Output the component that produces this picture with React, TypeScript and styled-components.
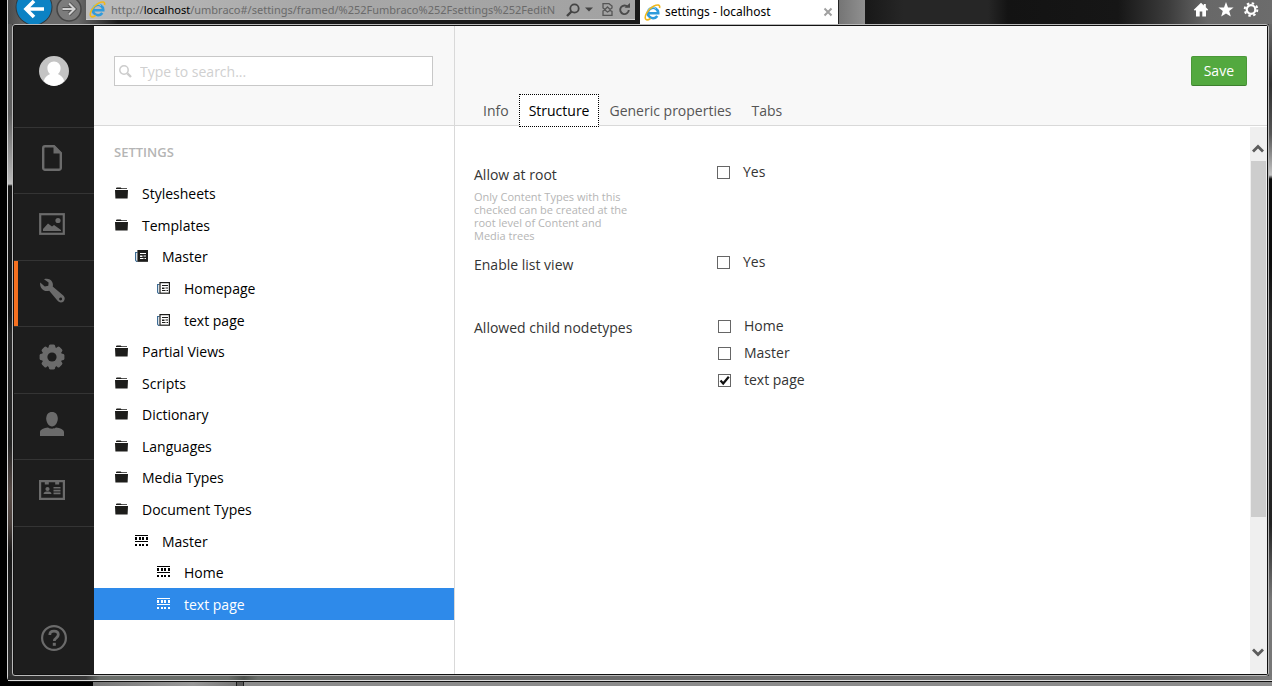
import React from 'react';
import styled, { createGlobalStyle } from 'styled-components';

const Global = createGlobalStyle`
  *, *::before, *::after { box-sizing: border-box; }
  html, body { margin: 0; padding: 0; background: #000; }
  body { font-family: "Open Sans", "Noto Sans", sans-serif; font-size: 14px; line-height: 20px; color: #343434; }
  button, input { font: inherit; color: inherit; margin: 0; padding: 0; }
  button { border: 0; background: none; cursor: pointer; }
  ul { list-style: none; margin: 0; padding: 0; }
  a { text-decoration: none; color: inherit; }
  svg { display: block; }
`;

/* ---------- window frame ---------- */

const Desktop = styled.div`
  min-height: 100vh;
  display: grid;
  grid-template-columns: 7px minmax(0, 1fr);
  grid-template-rows: minmax(0, 1fr) 4px;
  background: #000;
`;

const WindowFrame = styled.div`
  grid-column: 2;
  display: flex;
  flex-direction: column;
  border-left: 1px solid #d4d4d4;
  border-bottom: 1px solid #111;
  border-bottom-left-radius: 5px;
  background: #3c3c3c;
`;

const FrameBody = styled.div`
  flex: 1;
  display: grid;
  grid-template-columns: 4px minmax(0, 1fr) 3px;
`;

const LeftEdge = styled.div`
  background: linear-gradient(180deg, #5a5a5a 0, #606060 90px, #b4b4b4 155px, #c0c0c0 160px, #161616 162px, #161616 290px, #2b2b2b 310px, #242424 420px, #5a4d48 470px, #4a403c 500px, #161616 530px, #333 100%);
`;

const RightEdge = styled.div`
  background: linear-gradient(180deg, #666 0, #2f2f2f 60px, #555 110px, #c4c4c4 151px, #0c0c0c 155px, #0c0c0c 240px, #2c2c2c 300px, #222 500px, #777 575px, #777 100%);
`;

const BottomEdge = styled.div`
  height: 5px;
  border-bottom: 1px solid #dcdcdc;
  background: linear-gradient(90deg, #2c2c2c 0, #383838 78px, #6a6e6a 92px, #6a6e6a 220px, #4c504c 236px, #6a6e6a 250px, #666 400px, #707070 900px, #606060 1160px, #7a7a7a 100%);
`;

const Content = styled.div`
  display: flex;
  border: 1px solid #b9b9b9;
  border-radius: 3px;
  background: #111;
  padding: 1px;
`;

const App = styled.div`
  flex: 1;
  min-width: 0;
  display: flex;
  background: #fff;
`;

const BehindWindow = styled.div`
  grid-column: 2;
  display: flex;
  padding-left: 86px;
`;

const BehindLeft = styled.div`
  width: 143px;
  background: linear-gradient(90deg, #777, #999 100px, #777);
`;

const BehindDivider = styled.div`
  width: 8px;
  border: solid #1c1c1c;
  border-width: 0 1px;
  background: #5a5a5a;
`;

const BehindRight = styled.div`
  flex: 1;
  background: #8c8c8c;
`;

/* ---------- browser bar ---------- */

const BrowserBar = styled.header`
  height: 24px;
  display: flex;
  align-items: flex-start;
  overflow: hidden;
  font-family: "Noto Sans", "Open Sans", sans-serif;
  font-size: 12px;
  line-height: 18px;
  background: linear-gradient(90deg, #4c4c4c 0, #6a6a6a 20px, #6a6a6a 70px, #191919 110px, #191919 860px, #262626 895px, #262626 980px, #131313 1000px, #161616 1110px, #3c3c3c 1160px, #686868 1200px, #6c6c6c 100%);
`;

const HistoryButtons = styled.div`
  width: 78px;
  flex: none;
`;

const AddressBar = styled.form`
  width: 549px;
  height: 20px;
  flex: 0 1 auto;
  display: flex;
  align-items: center;
  gap: 5px;
  padding: 0 4px 0 3px;
  border-bottom: 1px solid #d0d0d0;
  background: linear-gradient(90deg, #bcbcbc 0, #a8a8a8 40%, #a2a2a2 100%);
`;

const Url = styled.div`
  flex: 1;
  min-width: 0;
  overflow: hidden;
  white-space: nowrap;
  font-size: 11px;
  color: #6a6a6a;
  b { font-weight: 400; color: #000; }
`;

const BarButton = styled.button`
  flex: none;
`;

const BrowserTab = styled.div`
  width: 199px;
  height: 24px;
  flex: none;
  display: flex;
  align-items: center;
  gap: 4px;
  margin-left: 5px;
  padding: 0 5px 0 4px;
  border-right: 1px solid #222;
  background: #fff;
  color: #000;
  span { flex: 1; }
`;

const NewTab = styled.button`
  width: 26px;
  height: 24px;
  flex: none;
  background: linear-gradient(90deg, #757575, #909090);
`;

const BrowserTools = styled.div`
  margin-left: auto;
  display: flex;
  gap: 9px;
  padding: 2px 13px 0 0;
`;

/* ---------- sections sidebar ---------- */

const Sidebar = styled.nav`
  width: 80px;
  flex: none;
  display: flex;
  flex-direction: column;
  background: #1d1d1d;
  color: #6b6b6b;
`;

const AvatarButton = styled.button`
  height: 102px;
  display: flex;
  justify-content: center;
  padding-top: 30px;
  border-bottom: 1px solid #343434;
`;

const Sections = styled.ul`
  display: grid;
  grid-template-rows: repeat(3, 66px 67px);
`;

const Section = styled.li<{ $active?: boolean }>`
  display: flex;
  border-bottom: 1px solid #343434;
  box-shadow: ${(p) => (p.$active ? 'inset 4px 0 #f57020' : 'none')};
`;

const SectionLink = styled.a`
  flex: 1;
  display: flex;
  align-items: center;
  justify-content: center;
  padding: 0 4px 6px 0;
`;

const HelpButton = styled.button`
  margin-top: auto;
  padding-bottom: 23px;
  display: flex;
  justify-content: center;
`;

/* ---------- tree ---------- */

const TreePanel = styled.aside`
  width: 360px;
  flex: none;
`;

const PanelHeader = styled.div`
  height: 100px;
  border-bottom: 1px solid #d9d9d9;
  background: #f8f8f8;
`;

const TreeHeader = styled(PanelHeader)`
  padding: 30px 21px 0 20px;
`;

const SearchBox = styled.label`
  height: 30px;
  display: flex;
  align-items: center;
  gap: 8px;
  padding-left: 4px;
  border: 1px solid #c8c8c8;
  background: #fff;
`;

const SearchInput = styled.input`
  flex: 1;
  min-width: 0;
  padding-top: 2px;
  border: 0;
  outline: 0;
  background: none;
  &::placeholder { color: #d0d0d0; opacity: 1; }
`;

const TreeTitle = styled.h2`
  margin: 0;
  padding: 16px 20px;
  font-size: 13px;
  line-height: 20px;
  font-weight: 600;
  text-transform: uppercase;
  color: #b5b5b5;
`;

const Tree = styled.ul`
  height: 442px;
  display: grid;
  grid-template-rows: repeat(14, 1fr);
`;

const indents = [21, 41, 63];

const TreeItem = styled.li<{ $level: number; $selected?: boolean }>`
  display: flex;
  padding-left: ${(p) => indents[p.$level]}px;
  background: ${(p) => (p.$selected ? '#2e8aea' : 'transparent')};
  color: ${(p) => (p.$selected ? '#fff' : '#000')};
`;

const TreeLink = styled.a`
  flex: 1;
  display: flex;
  align-items: center;
  gap: 14px;
  padding-top: 1px;
  svg { margin-bottom: 2px; }
`;

/* ---------- editor ---------- */

const Editor = styled.main`
  flex: 1;
  min-width: 0;
  display: flex;
  flex-direction: column;
  border-left: 1px solid #d9d9d9;
`;

const EditorHeader = styled(PanelHeader)`
  display: flex;
  justify-content: space-between;
  align-items: flex-start;
  padding: 30px 20px 0 18px;
`;

const SaveButton = styled.button`
  height: 30px;
  padding: 0 12px;
  border: 1px solid #4a9838;
  border-bottom-color: #3d7f2e;
  border-radius: 2px;
  background: #53a93f;
  color: #fff;
`;

const Tabs = styled.div`
  display: flex;
  margin-top: 38px;
`;

const Tab = styled.button<{ $active?: boolean }>`
  height: 33px;
  padding: 0 9px;
  border: 1px dotted ${(p) => (p.$active ? '#000' : 'transparent')};
  background: ${(p) => (p.$active ? '#fff' : 'none')};
  color: ${(p) => (p.$active ? '#000' : '#555')};
`;

const EditorBody = styled.div`
  flex: 1;
  display: flex;
  padding-top: 1px;
`;

const Form = styled.form`
  flex: 1;
  padding: 35px 19px;
`;

const Property = styled.div<{ $height: number }>`
  display: grid;
  grid-template-columns: 243px minmax(0, 1fr);
  min-height: ${(p) => p.$height}px;
`;

const PropertyName = styled.div`
  padding-top: 3px;
`;

const Help = styled.p`
  width: 160px;
  margin: 5px 0 0;
  font-size: 11px;
  line-height: 13px;
  color: #b5b5b5;
`;

const Options = styled.div<{ $inset?: boolean }>`
  display: flex;
  flex-direction: column;
  align-items: flex-start;
  gap: 7px;
  padding: ${(p) => (p.$inset ? '1px 0 0 1px' : '0')};
`;

const Option = styled.label`
  display: flex;
  align-items: center;
  gap: 13px;
`;

const Box = styled.span`
  display: grid;
  width: 13px;
  height: 13px;
  > * { grid-area: 1 / 1; }
  svg { pointer-events: none; visibility: hidden; }
  input:checked + svg { visibility: visible; }
`;

const BoxInput = styled.input`
  appearance: none;
  width: 13px;
  height: 13px;
  border: 1px solid #666;
  background: #fff;
`;

const ScrollBar = styled.div`
  width: 17px;
  display: flex;
  flex-direction: column;
  padding: 0 1px;
  background: #efefef;
`;

const ScrollButton = styled.button<{ $end?: boolean }>`
  height: 34px;
  display: flex;
  justify-content: center;
  align-items: flex-end;
  margin-top: ${(p) => (p.$end ? 'auto' : 0)};
  padding-bottom: ${(p) => (p.$end ? 16 : 7)}px;
`;

const ScrollThumb = styled.div`
  flex: 0 0 65%;
  background: #cdcdcd;
`;

/* ---------- icons ---------- */

const IeIcon = () => (
  <svg width="17" height="17" viewBox="0 0 17 17">
    <path d="M3.600 9.200h10.600v-.6A5.200 5.200 0 1 0 13.300 12" fill="none" stroke="#2f9bdc" strokeWidth="2.600" />
    <path d="M3.500 6.500a5.400 5.400 0 0 1 8.500-2" fill="none" stroke="#8ed8f8" strokeWidth="1" />
    <path d="M2 15.500C-.5 13 4 5 9.500 2.300 13.500.3 16.500.6 15.500 4M2 15.500c1 .8 3 0 4.500-1" fill="none" stroke="#f0b81e" strokeWidth="1.600" />
  </svg>
);

const HistoryIcon = () => (
  <svg width="78" height="24" viewBox="8 0 78 24">
    <circle cx="34" cy="7" r="18.500" fill="#33393d" />
    <circle cx="34" cy="7" r="17.500" fill="#0b82c4" />
    <path d="M44 9H27M34 1l-8 8 8 8" fill="none" stroke="#fff" strokeWidth="3.600" />
    <circle cx="69" cy="9" r="12" fill="#7c7c7c" stroke="#454545" strokeWidth="1.500" />
    <path d="M62.500 9h11M69 3.500L74.500 9 69 14.500" fill="none" stroke="#555" strokeWidth="4" />
    <path d="M62.500 9h11M69 3.500L74.500 9 69 14.500" fill="none" stroke="#d0d0d0" strokeWidth="2" />
  </svg>
);

const AvatarIcon = () => (
  <svg width="30" height="30" viewBox="0 0 30 30">
    <circle cx="15" cy="15" r="15" fill="#c4c4c4" />
    <path d="M15 5.500c4 0 6.600 3 6.600 6.700 0 2.400-1.100 4.600-2.700 5.800 3.200 1.400 5.400 3.500 6.300 6.900A15 15 0 0 1 15 30a15 15 0 0 1-10.200-5.100c.9-3.400 3.100-5.500 6.300-6.900-1.600-1.200-2.700-3.400-2.700-5.800 0-3.700 2.600-6.700 6.600-6.700z" fill="#fff" />
  </svg>
);

const DocIcon = () => (
  <svg width="20" height="26" viewBox="0 0 20 26" fill="none" stroke="currentColor" strokeWidth="2.400">
    <path d="M12 1.200H3A1.800 1.800 0 0 0 1.200 3v20A1.800 1.800 0 0 0 3 24.800h14a1.800 1.800 0 0 0 1.800-1.800V8z" />
    <path d="M11.500 1h1.500l6 6.500v1h-7.500z" fill="currentColor" stroke="none" />
  </svg>
);

const PictureIcon = () => (
  <svg width="26" height="22" viewBox="0 0 26 22">
    <rect x="1.200" y="1.200" width="23.600" height="19.600" fill="none" stroke="currentColor" strokeWidth="2.200" />
    <path d="M4 18v-2l5-5.500 4 3 2-1.500 7 5v1z" fill="currentColor" />
    <circle cx="19" cy="7.500" r="2.600" fill="currentColor" />
  </svg>
);

const WrenchIcon = () => (
  <svg width="26" height="26" viewBox="0 0 26 26">
    <path fillRule="evenodd" d="M5 1.300c3.300-1.200 6.700-.1 8.200 2.700.8 1.600.9 3.200.5 4.600l10.600 8.900c1.900 1.700 1.800 4.400.3 5.900s-4.200 1.500-5.800-.3L10.200 12.700c-1.800.6-3.900.5-5.600-.5C1.800 10.500.7 7.500 1.200 4.600l4.600 4 3.500-.9.300-3.300zM21.600 19.400a1.500 1.500 0 1 0 .01 3 1.500 1.500 0 0 0-.01-3z" fill="currentColor" />
  </svg>
);

const CogIcon = () => (
  <svg width="26" height="26" viewBox="0 0 26 26">
    <g fill="currentColor">
      {[0, 45, 90, 135].map((a) => (
        <rect key={a} x="9.800" y="0.600" width="6.400" height="24.800" rx="1.600" transform={`rotate(${a} 13 13)`} />
      ))}
      <circle cx="13" cy="13" r="10.300" />
    </g>
    <circle cx="13" cy="13" r="4.600" fill="#1d1d1d" />
  </svg>
);

const UserIcon = () => (
  <svg width="24" height="24" viewBox="0 0 24 24" fill="currentColor">
    <path d="M12 0c3.600 0 5.800 2.700 5.800 6.500S15.300 14.500 12 14.500 6.200 10.300 6.200 6.500 8.400 0 12 0z" />
    <path d="M0 24v-4c0-2.400 4-4 8-4.500 2.200 1.600 5.800 1.600 8 0 4 .5 8 2.100 8 4.500v4z" />
  </svg>
);

const MembersIcon = () => (
  <svg width="26" height="20" viewBox="0 0 26 20" fill="currentColor">
    <path fillRule="evenodd" d="M0 0h26v20H0zM2.200 2.200v15.600h21.600V2.200h-3.600v2.300h-4V2.200H9.800v2.300h-4V2.200z" />
    <circle cx="8.500" cy="9" r="2.100" />
    <path d="M4.500 14c0-2 2-2.500 4-2.500s4 .5 4 2.500zM14.500 7h7v1.600h-7zM14.500 9.800h7v1.600h-7zM14.500 12.600h7v1.600h-7z" />
  </svg>
);

const HelpIcon = () => (
  <svg width="26" height="26" viewBox="0 0 26 26" fill="none" stroke="currentColor">
    <circle cx="13" cy="13" r="11.900" strokeWidth="2.200" />
    <path d="M8.800 10c0-2.400 1.700-3.800 4.200-3.800s4.300 1.400 4.300 3.600c0 3-4 3-4 6.200" strokeWidth="2.800" />
    <path d="M11.800 17.800h3v3h-3z" fill="currentColor" stroke="none" />
  </svg>
);

const SearchIcon = () => (
  <svg width="13" height="13" viewBox="0 0 13 13" fill="none" stroke="#ccc">
    <circle cx="5" cy="5" r="4.200" strokeWidth="1.500" />
    <path d="M8.300 8.300l3.700 3.700" strokeWidth="2.400" />
  </svg>
);

const FolderIcon = () => (
  <svg width="13" height="12" viewBox="0 0 13 12" fill="#1d1d1b">
    <path d="M1 2V1.200L1.700.5h4l.8.800H12V2zM0 3h13l-.4 8.500H.4z" />
  </svg>
);

const TemplateIcon = ({ filled }: { filled?: boolean }) => (
  <svg width="13" height="12" viewBox="0 0 13 12">
    <path d="M2.500 2.500H.6v7.800l1 1h1" fill="none" stroke="#3d6c94" strokeWidth="1.200" />
    <rect x="3" y="0.600" width="9.400" height="10.600" fill={filled ? '#1d1d1b' : '#fff'} stroke="#1d1d1b" strokeWidth="1.200" />
    <path d="M5 3.500h6M8.500 6H11M5 8.500h3.500M9.500 8.500H11" stroke={filled ? '#fff' : '#1d1d1b'} strokeWidth="1.200" />
    <path d="M5 5.500h2.500V7H5z" fill={filled ? '#fff' : '#1d1d1b'} />
  </svg>
);

const DocTypeIcon = () => (
  <svg width="13" height="12" viewBox="0 0 13 12" fill="currentColor">
    <path d="M0 0h13v1H0zM0 6h13v1H0z" />
    {[0, 4, 7, 11].map((x) => (
      <path key={x} d={`M${x} 2h2v3h-2zM${x} 9h2v2h-2z`} />
    ))}
  </svg>
);

const ChevronIcon = ({ down }: { down?: boolean }) => (
  <svg width="13" height="10" viewBox="0 0 13 10">
    <path d={down ? 'M1 1.500l5 5 5-5' : 'M1 7.500l5-5 5 5'} fill="none" stroke="#5c5c5c" strokeWidth="2.800" />
  </svg>
);

const kindIcon = {
  folder: <FolderIcon />,
  layout: <TemplateIcon filled />,
  template: <TemplateIcon />,
  doctype: <DocTypeIcon />,
};

/* ---------- data ---------- */

const sections = [
  { name: 'Content', icon: <DocIcon /> },
  { name: 'Media', icon: <PictureIcon /> },
  { name: 'Settings', icon: <WrenchIcon />, active: true },
  { name: 'Developer', icon: <CogIcon /> },
  { name: 'Users', icon: <UserIcon /> },
  { name: 'Members', icon: <MembersIcon /> },
];

type Node = { name: string; kind: keyof typeof kindIcon; level: number; selected?: boolean };

const nodes: Node[] = [
  { name: 'Stylesheets', kind: 'folder', level: 0 },
  { name: 'Templates', kind: 'folder', level: 0 },
  { name: 'Master', kind: 'layout', level: 1 },
  { name: 'Homepage', kind: 'template', level: 2 },
  { name: 'text page', kind: 'template', level: 2 },
  { name: 'Partial Views', kind: 'folder', level: 0 },
  { name: 'Scripts', kind: 'folder', level: 0 },
  { name: 'Dictionary', kind: 'folder', level: 0 },
  { name: 'Languages', kind: 'folder', level: 0 },
  { name: 'Media Types', kind: 'folder', level: 0 },
  { name: 'Document Types', kind: 'folder', level: 0 },
  { name: 'Master', kind: 'doctype', level: 1 },
  { name: 'Home', kind: 'doctype', level: 2 },
  { name: 'text page', kind: 'doctype', level: 2, selected: true },
];

const tabs = ['Info', 'Structure', 'Generic properties', 'Tabs'];

const CheckOption = ({ label, checked }: { label: string; checked?: boolean }) => (
  <Option>
    <Box>
      <BoxInput type="checkbox" defaultChecked={checked} />
      <svg width="13" height="13" viewBox="0 0 13 13">
        <path d="M2.500 6.500l2.700 3L10.800 2.800" fill="none" stroke="#111" strokeWidth="2.200" />
      </svg>
    </Box>
    {label}
  </Option>
);

export default function SettingsPage() {
  return (
    <Desktop>
      <Global />
      <WindowFrame>
        <BrowserBar>
          <HistoryButtons><HistoryIcon /></HistoryButtons>
          <AddressBar>
            <IeIcon />
            <Url>http://<b>localhost</b>/umbraco#/settings/framed/%252Fumbraco%252Fsettings%252FeditN</Url>
            <BarButton type="button" aria-label="Search">
              <svg width="14" height="14" viewBox="0 0 14 14" fill="none" stroke="#444">
                <circle cx="8.500" cy="5.500" r="4.200" strokeWidth="1.800" />
                <path d="M5.500 8.500L1 13" strokeWidth="2.400" />
              </svg>
            </BarButton>
            <BarButton type="button" aria-label="Show address list">
              <svg width="8" height="5" viewBox="0 0 8 5"><path d="M0 .5h8L4 4.500z" fill="#444" /></svg>
            </BarButton>
            <BarButton type="button" aria-label="Compatibility view">
              <svg width="15" height="13" viewBox="-4 0 15 13" fill="none" stroke="#555" strokeWidth="1.300">
                <path d="M1 5V.7h6L10 3v2L8 6.500 5.500 4 3 6.500zM1 8l2-1 2.500 2L8 7.500l2 1v3.800H1z" />
              </svg>
            </BarButton>
            <BarButton type="button" aria-label="Refresh">
              <svg width="13" height="13" viewBox="0 0 13 13">
                <path d="M9.800 4A4.300 4.300 0 1 0 10.800 7" fill="none" stroke="#4a4a4a" strokeWidth="1.900" />
                <path d="M6.500 4.800H12V0z" fill="#4a4a4a" />
              </svg>
            </BarButton>
          </AddressBar>
          <BrowserTab>
            <IeIcon />
            <span>settings - localhost</span>
            <BarButton type="button" aria-label="Close tab">
              <svg width="10" height="10" viewBox="0 0 10 10"><path d="M1.500 1.500l7 7M8.500 1.500l-7 7" stroke="#a0a0a0" strokeWidth="2" /></svg>
            </BarButton>
          </BrowserTab>
          <NewTab type="button" aria-label="New tab" />
          <BrowserTools>
            <BarButton type="button" aria-label="Home">
              <svg width="16" height="15" viewBox="0 0 16 15"><path d="M8 .8L.8 7.800l1.200 1L3 8v6.500h3.700V9.500h2.600v5H13V8l1 .8 1.200-1L12.800 5.300V2h-2v1.400z" fill="#fff" /></svg>
            </BarButton>
            <BarButton type="button" aria-label="Favourites">
              <svg width="16" height="15" viewBox="0 0 16 15"><path d="M8 0l2 5.400 5.600.2-4.400 3.500 1.600 5.500L8 11.400l-4.800 3.200 1.600-5.500L.4 5.600 6 5.400z" fill="#fff" /></svg>
            </BarButton>
            <BarButton type="button" aria-label="Tools">
              <svg width="16" height="15" viewBox="0 0 16 15" fill="none" stroke="#fff">
                <circle cx="8" cy="7.500" r="4.300" strokeWidth="2.200" />
                <circle cx="8" cy="7.500" r="6.300" strokeWidth="2" strokeDasharray="2.470 2.470" />
              </svg>
            </BarButton>
          </BrowserTools>
        </BrowserBar>

        <FrameBody>
          <LeftEdge />
          <Content>
            <App>
              <Sidebar aria-label="Sections">
                <AvatarButton aria-label="Your profile"><AvatarIcon /></AvatarButton>
                <Sections>
                  {sections.map((s) => (
                    <Section key={s.name} $active={s.active}>
                      <SectionLink href="#" aria-label={s.name}>{s.icon}</SectionLink>
                    </Section>
                  ))}
                </Sections>
                <HelpButton aria-label="Help"><HelpIcon /></HelpButton>
              </Sidebar>

              <TreePanel>
                <TreeHeader>
                  <SearchBox>
                    <SearchIcon />
                    <SearchInput type="text" aria-label="Search" placeholder="Type to search..." />
                  </SearchBox>
                </TreeHeader>
                <TreeTitle>Settings</TreeTitle>
                <Tree>
                  {nodes.map((n, i) => (
                    <TreeItem key={i} $level={n.level} $selected={n.selected}>
                      <TreeLink href="#">{kindIcon[n.kind]}{n.name}</TreeLink>
                    </TreeItem>
                  ))}
                </Tree>
              </TreePanel>

              <Editor>
                <EditorHeader>
                  <Tabs role="tablist">
                    {tabs.map((t) => (
                      <Tab key={t} role="tab" aria-selected={t === 'Structure'} $active={t === 'Structure'}>{t}</Tab>
                    ))}
                  </Tabs>
                  <SaveButton type="button">Save</SaveButton>
                </EditorHeader>
                <EditorBody>
                  <Form>
                    <Property $height={90}>
                      <PropertyName>
                        Allow at root
                        <Help>Only Content Types with this checked can be created at the root level of Content and Media trees</Help>
                      </PropertyName>
                      <Options><CheckOption label="Yes" /></Options>
                    </Property>
                    <Property $height={63}>
                      <PropertyName>Enable list view</PropertyName>
                      <Options><CheckOption label="Yes" /></Options>
                    </Property>
                    <Property $height={80}>
                      <PropertyName>Allowed child nodetypes</PropertyName>
                      <Options $inset>
                        <CheckOption label="Home" />
                        <CheckOption label="Master" />
                        <CheckOption label="text page" checked />
                      </Options>
                    </Property>
                  </Form>
                  <ScrollBar>
                    <ScrollButton aria-label="Scroll up"><ChevronIcon /></ScrollButton>
                    <ScrollThumb />
                    <ScrollButton $end aria-label="Scroll down"><ChevronIcon down /></ScrollButton>
                  </ScrollBar>
                </EditorBody>
              </Editor>
            </App>
          </Content>
          <RightEdge />
        </FrameBody>
        <BottomEdge />
      </WindowFrame>
      <BehindWindow>
        <BehindLeft />
        <BehindDivider />
        <BehindRight />
      </BehindWindow>
    </Desktop>
  );
}
